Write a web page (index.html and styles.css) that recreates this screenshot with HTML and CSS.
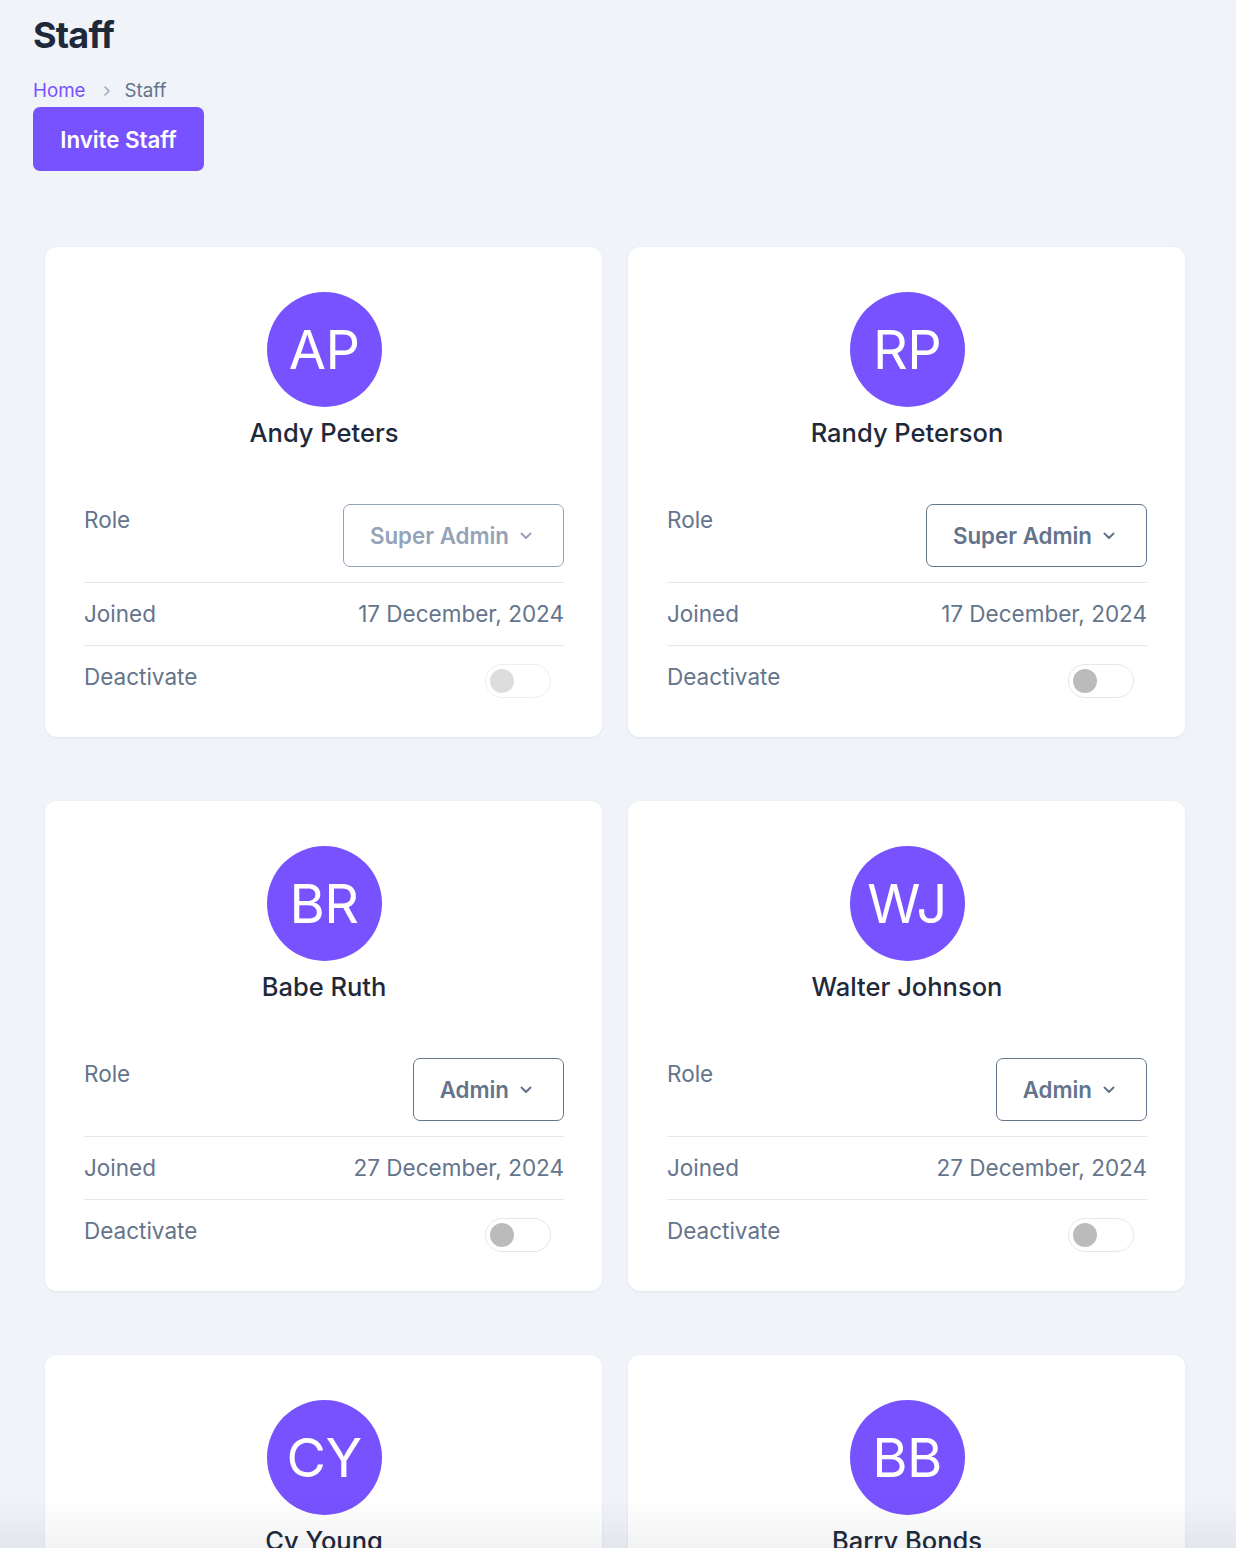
FILE: index.html
```html
<!DOCTYPE html>
<html lang="en">
<head>
<meta charset="utf-8">
<title>Staff</title>
<link rel="stylesheet" href="styles.css">
</head>
<body>
<div class="page">
  <header class="page-header">
    <h1 class="title">Staff</h1>
    <nav class="breadcrumb">
      <a class="crumb-link" href="#">Home</a>
      <svg class="crumb-sep" width="8" height="12" viewBox="0 0 8 12"><path d="M2 2l4 4-4 4" fill="none" stroke="#94a3b8" stroke-width="1.4" stroke-linecap="round" stroke-linejoin="round"/></svg>
      <span class="crumb-current">Staff</span>
    </nav>
    <button class="invite-btn">Invite Staff</button>
  </header>

  <main class="grid">
    <section class="card">
      <div class="avatar">AP</div>
      <div class="name">Andy Peters</div>
      <div class="row row-role">
        <span class="label">Role</span>
        <div class="select select-disabled">Super Admin <svg class="chev" width="12" height="8" viewBox="0 0 12 8"><path d="M1.5 1.5l4.5 4.5 4.5-4.5" fill="none" stroke="currentColor" stroke-width="2" stroke-linecap="round" stroke-linejoin="round"/></svg></div>
      </div>
      <div class="row">
        <span class="label">Joined</span>
        <span class="value">17 December, 2024</span>
      </div>
      <div class="row row-last">
        <span class="label">Deactivate</span>
        <span class="toggle toggle-disabled"><span class="knob"></span></span>
      </div>
    </section>

    <section class="card">
      <div class="avatar">RP</div>
      <div class="name">Randy Peterson</div>
      <div class="row row-role">
        <span class="label">Role</span>
        <div class="select">Super Admin <svg class="chev" width="12" height="8" viewBox="0 0 12 8"><path d="M1.5 1.5l4.5 4.5 4.5-4.5" fill="none" stroke="currentColor" stroke-width="2" stroke-linecap="round" stroke-linejoin="round"/></svg></div>
      </div>
      <div class="row">
        <span class="label">Joined</span>
        <span class="value">17 December, 2024</span>
      </div>
      <div class="row row-last">
        <span class="label">Deactivate</span>
        <span class="toggle"><span class="knob"></span></span>
      </div>
    </section>

    <section class="card">
      <div class="avatar">BR</div>
      <div class="name">Babe Ruth</div>
      <div class="row row-role">
        <span class="label">Role</span>
        <div class="select">Admin <svg class="chev" width="12" height="8" viewBox="0 0 12 8"><path d="M1.5 1.5l4.5 4.5 4.5-4.5" fill="none" stroke="currentColor" stroke-width="2" stroke-linecap="round" stroke-linejoin="round"/></svg></div>
      </div>
      <div class="row">
        <span class="label">Joined</span>
        <span class="value">27 December, 2024</span>
      </div>
      <div class="row row-last">
        <span class="label">Deactivate</span>
        <span class="toggle"><span class="knob"></span></span>
      </div>
    </section>

    <section class="card">
      <div class="avatar">WJ</div>
      <div class="name">Walter Johnson</div>
      <div class="row row-role">
        <span class="label">Role</span>
        <div class="select">Admin <svg class="chev" width="12" height="8" viewBox="0 0 12 8"><path d="M1.5 1.5l4.5 4.5 4.5-4.5" fill="none" stroke="currentColor" stroke-width="2" stroke-linecap="round" stroke-linejoin="round"/></svg></div>
      </div>
      <div class="row">
        <span class="label">Joined</span>
        <span class="value">27 December, 2024</span>
      </div>
      <div class="row row-last">
        <span class="label">Deactivate</span>
        <span class="toggle"><span class="knob"></span></span>
      </div>
    </section>

    <section class="card">
      <div class="avatar">CY</div>
      <div class="name">Cy Young</div>
      <div class="row row-role">
        <span class="label">Role</span>
        <div class="select">Admin <svg class="chev" width="12" height="8" viewBox="0 0 12 8"><path d="M1.5 1.5l4.5 4.5 4.5-4.5" fill="none" stroke="currentColor" stroke-width="2" stroke-linecap="round" stroke-linejoin="round"/></svg></div>
      </div>
      <div class="row">
        <span class="label">Joined</span>
        <span class="value">27 December, 2024</span>
      </div>
      <div class="row row-last">
        <span class="label">Deactivate</span>
        <span class="toggle"><span class="knob"></span></span>
      </div>
    </section>

    <section class="card">
      <div class="avatar">BB</div>
      <div class="name">Barry Bonds</div>
      <div class="row row-role">
        <span class="label">Role</span>
        <div class="select">Admin <svg class="chev" width="12" height="8" viewBox="0 0 12 8"><path d="M1.5 1.5l4.5 4.5 4.5-4.5" fill="none" stroke="currentColor" stroke-width="2" stroke-linecap="round" stroke-linejoin="round"/></svg></div>
      </div>
      <div class="row">
        <span class="label">Joined</span>
        <span class="value">27 December, 2024</span>
      </div>
      <div class="row row-last">
        <span class="label">Deactivate</span>
        <span class="toggle"><span class="knob"></span></span>
      </div>
    </section>
  </main>
  <div class="fade"></div>
</div>
</body>
</html>
```

FILE: styles.css
```css
* { box-sizing: border-box; }

html, body {
  margin: 0;
  padding: 0;
  background: #f0f3f8;
  font-family: Inter, "Noto Sans", "Liberation Sans", sans-serif;
  color: #1e293b;
}

.page {
  height: 100vh;
  overflow: hidden;
  padding: 0 39px 0 33px;
}

.page-header {
  display: flex;
  flex-direction: column;
  align-items: flex-start;
}

.title {
  margin: 0;
  padding-top: 13px;
  font-size: 36px;
  line-height: 44px;
  font-weight: 700;
  color: #1e293b;
  letter-spacing: -0.8px;
}

.breadcrumb {
  display: flex;
  align-items: center;
  margin-top: 18px;
  height: 32px;
  font-size: 18.75px;
  line-height: 28px;
}

.crumb-link {
  color: #7752fe;
  text-decoration: none;
}

.crumb-sep {
  margin: 0 14px 0 17px;
}

.crumb-current {
  color: #64748b;
}

.invite-btn {
  width: 171px;
  height: 64px;
  border: none;
  border-radius: 7px;
  background: #7752fe;
  color: #ffffff;
  font-family: inherit;
  font-size: 22.3px;
  font-weight: 600;
  cursor: pointer;
}

.grid {
  display: grid;
  grid-template-columns: 557px 557px;
  column-gap: 26px;
  row-gap: 64px;
  margin: 76px 0 0 12px;
}

.card {
  background: #ffffff;
  border-radius: 12px;
  box-shadow: 0 1px 3px rgba(15, 23, 42, 0.06);
  padding: 45px 38px 29px 39px;
  display: flex;
  flex-direction: column;
  align-items: center;
}

.avatar {
  flex-shrink: 0;
  width: 115px;
  height: 115px;
  border-radius: 50%;
  background: #7752fe;
  color: #ffffff;
  display: flex;
  align-items: center;
  justify-content: center;
  font-size: 54px;
  font-weight: 400;
  letter-spacing: -0.5px;
}

.name {
  margin-top: 8px;
  font-size: 25.5px;
  line-height: 36px;
  font-weight: 500;
  color: #1e293b;
  margin-bottom: 53px;
}

.row {
  width: 100%;
  display: flex;
  justify-content: space-between;
  align-items: center;
  padding: 15px 0;
  border-bottom: 1px solid #e2e8f0;
  font-size: 22.5px;
  line-height: 32px;
}

.row-role {
  align-items: flex-start;
  padding-top: 0;
}

.row-last {
  border-bottom: none;
  align-items: flex-start;
}

.label {
  color: #64748b;
}

.value {
  color: #64748b;
}

.select {
  height: 63px;
  display: flex;
  align-items: center;
  gap: 11px;
  padding: 0 31px 0 26px;
  border: 1.5px solid #64748b;
  border-radius: 7px;
  color: #64748b;
  font-weight: 600;
  font-size: 22.3px;
}

.select-disabled {
  color: #94a3b8;
  border-color: #94a3b8;
}

.chev {
  display: block;
}

.toggle {
  width: 66px;
  height: 34px;
  margin: 3px 13px -5px 0;
  border: 1.5px solid #e2e8f0;
  border-radius: 17px;
  background: #ffffff;
  display: flex;
  align-items: center;
  padding-left: 4px;
}

.toggle-disabled {
  border-color: #efefef;
}

.knob {
  width: 24px;
  height: 24px;
  border-radius: 50%;
  background: #bbbbbb;
}

.toggle-disabled .knob {
  background: #dddddd;
}

.fade {
  position: fixed;
  left: 0;
  right: 0;
  bottom: 0;
  height: 50px;
  background: linear-gradient(to bottom, rgba(30, 41, 59, 0), rgba(30, 41, 59, 0.06));
  pointer-events: none;
}
```
